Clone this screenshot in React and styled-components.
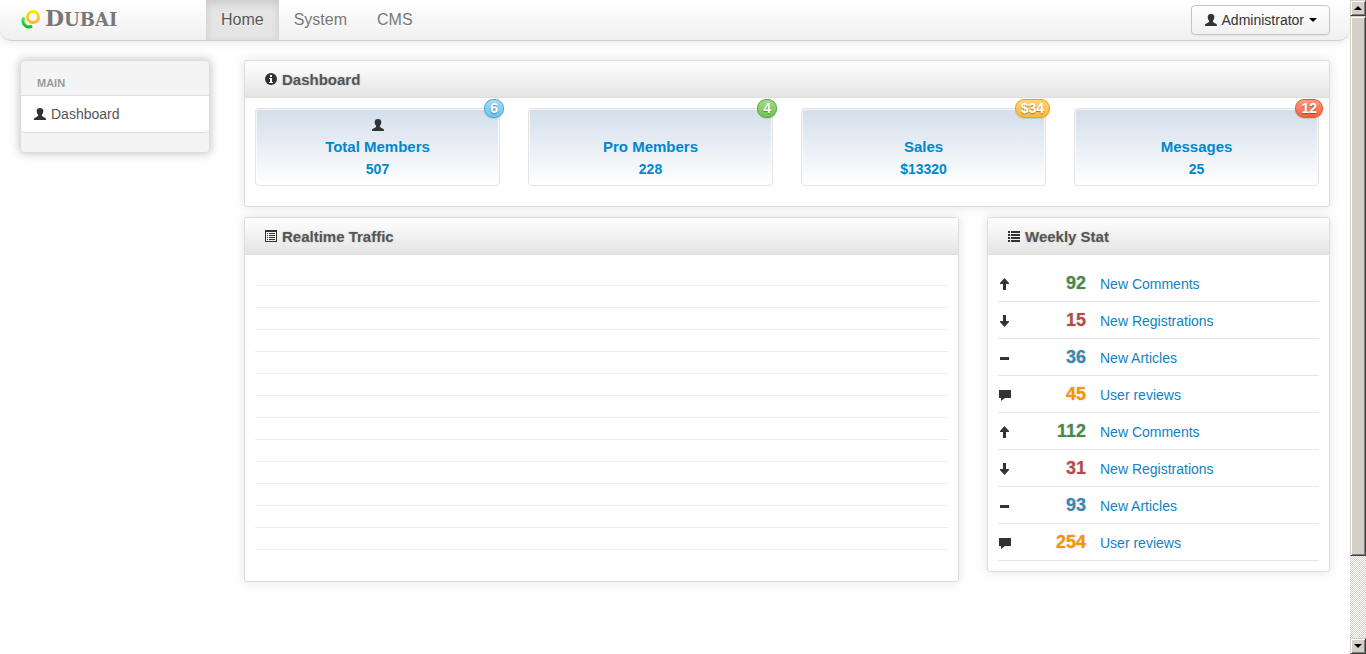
import React from "react";
import styled, { createGlobalStyle, css } from "styled-components";

const Global = createGlobalStyle`
  * { box-sizing: border-box; }
  body {
    margin: 0;
    background: #fefefe;
    color: #333;
    font: 14px/20px "Liberation Sans", Arial, sans-serif;
  }
  a { color: inherit; text-decoration: none; }
  ul { list-style: none; margin: 0; padding: 0; }
  h1, h2 { margin: 0; }
`;

const Shell = styled.div`
  display: grid;
  grid-template-columns: minmax(0, 1fr) 16px;
  height: 100vh;
  overflow: hidden;
`;

const Page = styled.div`
  overflow: hidden;
`;

const Navbar = styled.header`
  display: flex;
  align-items: stretch;
  height: 41px;
  padding: 0 20px;
  background: linear-gradient(#ffffff, #f0f0f0);
  border-bottom: 1px solid #d0d0d0;
  border-radius: 0 0 12px 12px;
  box-shadow: 0 1px 10px rgba(0, 0, 0, 0.1);
`;

const Brand = styled.a`
  display: flex;
  align-items: center;
  gap: 4px;
  width: 186px;
  height: 37px;
`;

const BrandName = styled.span`
  display: block;
  color: #777;
  font: bold 18px/36px "DejaVu Serif", serif;
  text-transform: uppercase;
  text-shadow: 0 1px 0 #fff;
  &::first-letter { font-size: 22px; }
`;

const NavMenu = styled.nav`
  display: flex;
  flex: 1;
`;

const NavLink = styled.a`
  padding: 0 15px;
  color: #777;
  font-size: 16px;
  line-height: 40px;
  text-shadow: 0 1px 0 #fff;
  ${(p) =>
    p.$active &&
    css`
      color: #555;
      background: #e5e5e5;
      box-shadow: inset 0 3px 8px rgba(0, 0, 0, 0.125);
    `}
`;

const UserButton = styled.button`
  display: flex;
  align-items: center;
  gap: 4px;
  height: 30px;
  margin-top: 5px;
  padding: 0 12px;
  color: #333;
  font: inherit;
  text-shadow: 0 1px 1px rgba(255, 255, 255, 0.75);
  background: linear-gradient(#ffffff, #f1f1f1);
  border: 1px solid #c5c5c5;
  border-radius: 4px;
  box-shadow: 0 1px 2px rgba(0, 0, 0, 0.05);
`;

const Caret = styled.span`
  margin-left: 1px;
  border: 4px solid transparent;
  border-top-color: #000;
  border-bottom: 0;
`;

const Body = styled.div`
  display: grid;
  grid-template-columns: 190fr 1086fr;
  gap: 34px;
  align-items: start;
  padding: 19px 20px;
`;

const Sidebar = styled.aside`
  padding: 12px 0 19px;
  background: #f4f4f4;
  border: 1px solid #ddd;
  border-radius: 4px;
  box-shadow: 0 0 10px #bdbdbd;
`;

const SidebarHeading = styled.h2`
  padding: 0 16px 2px;
  color: #999;
  font-size: 11px;
  line-height: 20px;
  text-transform: uppercase;
  text-shadow: 0 1px 0 #fff;
`;

const SidebarLink = styled.a`
  display: flex;
  align-items: center;
  gap: 4px;
  height: 38px;
  padding: 0 12px;
  color: #555;
  background: #fff;
  border: solid #ddd;
  border-width: 1px 0;
  border-radius: 0 0 4px 4px;
`;

const Content = styled.main`
  display: grid;
  gap: 10px;
`;

const Columns = styled.div`
  display: grid;
  grid-template-columns: 715fr 343fr;
  gap: 28px;
  align-items: start;
`;

const Panel = styled.section`
  background: #fff;
  border: 1px solid #dedede;
  border-radius: 3px;
  box-shadow: 0 0 10px rgba(189, 189, 189, 0.4);
`;

const PanelHeader = styled.header`
  display: flex;
  align-items: center;
  gap: 4px;
  height: 37px;
  padding: 0 19px;
  background: linear-gradient(#ffffff, #e4e4e4);
  border-bottom: 1px solid #dedede;
  border-radius: 3px 3px 0 0;
`;

const PanelTitle = styled.h2`
  padding-top: 2px;
  color: #555;
  font-size: 15px;
  line-height: 20px;
  text-shadow: 0 0 2px rgba(0, 0, 0, 0.2);
`;

const PanelBody = styled.div`
  padding: 10px;
`;

const Tiles = styled.div`
  display: grid;
  grid-template-columns: repeat(4, minmax(0, 1fr));
  gap: 28px;
  margin-bottom: 10px;
`;

const Tile = styled.a`
  position: relative;
  display: flex;
  flex-direction: column;
  align-items: center;
  height: 78px;
  padding-top: 5px;
  color: #0088cc;
  font-weight: bold;
  line-height: 22px;
  background: linear-gradient(#d3deeb, #ffffff);
  border: 1px solid #e3e3e3;
  border-radius: 4px;
  box-shadow: inset 0 0 0 1px rgba(255, 255, 255, 0.7);
`;

const TileIcon = styled.span`
  display: flex;
  align-items: center;
  height: 22px;
`;

const TileLabel = styled.span`
  font-size: 15px;
`;

const tones = {
  blue: ["#a5dcf7", "#6cc2ee", "#44a9e0"],
  green: ["#a3dd84", "#70c24f", "#58a83a"],
  yellow: ["#ffd27c", "#fcb83a", "#f0a01c"],
  red: ["#fc9b83", "#fb5f3d", "#f45232"],
};

const Badge = styled.span`
  position: absolute;
  top: -10px;
  right: -5px;
  height: 19px;
  padding: 0 5px;
  color: #fff;
  font-size: 14px;
  line-height: 17px;
  text-shadow: 0 1px 1px rgba(0, 0, 0, 0.35);
  background: linear-gradient(${(p) => tones[p.$tone][0]}, ${(p) => tones[p.$tone][1]});
  border: 1px solid ${(p) => tones[p.$tone][2]};
  border-radius: 9px;
  box-shadow: 0 1px 1px rgba(0, 0, 0, 0.1);
`;

const TrafficGrid = styled.ul`
  padding-bottom: 21px;
`;

const TrafficLine = styled.li`
  height: 22px;
  border-bottom: 1px solid #eee;
  &:first-child { height: 21px; }
`;

const StatRow = styled.li`
  display: flex;
  align-items: center;
  height: 37px;
  padding-top: 2px;
  border-bottom: 1px solid #e6e6e6;
`;

const StatCount = styled.span`
  width: 74px;
  padding-bottom: 2px;
  color: ${(p) => p.$color};
  font-size: 18px;
  font-weight: bold;
  text-align: right;
  text-shadow: 0 0 2px rgba(0, 0, 0, 0.25);
`;

const StatLink = styled.a`
  margin-left: 14px;
  color: #0e83c4;
`;

const Scrollbar = styled.div`
  display: flex;
  flex-direction: column;
  background: repeating-conic-gradient(#d4d0c8 0 25%, #ffffff 0 50%) 0 0 / 2px 2px;
`;

const raised = css`
  background: #d4d0c8;
  border: 1px solid;
  border-color: #d4d0c8 #404040 #404040 #d4d0c8;
  box-shadow: inset 1px 1px 0 #fff, inset -1px -1px 0 #808080;
`;

const ScrollButton = styled.button`
  ${raised}
  display: flex;
  align-items: center;
  justify-content: center;
  height: 16px;
  padding: 0;
  border-radius: 0;
`;

const ScrollThumb = styled.div`
  ${raised}
  flex: 540;
`;

const ScrollTrack = styled.div`
  flex: 82;
`;

const Arrow = styled.span`
  border: 4px solid transparent;
  ${(p) =>
    p.$up
      ? "border-top: 0; border-bottom-color: #000;"
      : "border-bottom: 0; border-top-color: #000;"}
`;

const Svg = styled.svg`
  display: block;
  flex: none;
  fill: #333;
`;

const glyphs = {
  user: <path d="M7 1c2.200 0 3.300 1.200 3.300 3 0 1.500-.5 2.800-1.300 3.600v1.200c.3.900 1.700 1.200 3 1.900.8.400 1 1 1 2.300H1c0-1.300.2-1.900 1-2.300 1.300-.7 2.700-1 3-1.900V7.600C4.200 6.800 3.700 5.500 3.700 4c0-1.800 1.100-3 3.300-3z" />,
  info: (
    <>
      <circle cx="7" cy="7" r="6" />
      <path fill="#fff" d="M6 3h2v2H6zM5 6h3v4h1v1H5v-1h1V7H5z" />
    </>
  ),
  sheet: <path fillRule="evenodd" d="M1 1h12v12H1zM2 3v9h10V3zM3 4h1v1H3zm2 0h6v1H5zM3 6h1v1H3zm2 0h6v1H5zM3 8h1v1H3zm2 0h6v1H5zM3 10h1v1H3zm2 0h6v1H5z" />,
  list: <path d="M1 2h2v2H1zm3 0h9v2H4zM1 5h2v2H1zm3 0h9v2H4zM1 8h2v2H1zm3 0h9v2H4zM1 11h2v2H1zm3 0h9v2H4z" />,
  up: <path d="M6.500 1L11 6v1H8v6H5V7H2V6z" />,
  down: <path d="M6.500 13L2 8V7h3V1h3v6h3v1z" />,
  minus: <path d="M2 6h9v3H2z" />,
  comment: <path d="M1 2h12v8H7l-4 3v-3H1z" />,
};

const Icon = ({ name }) => (
  <Svg width="14" height="14" viewBox="0 0 14 14" aria-hidden="true">
    {glyphs[name]}
  </Svg>
);

const Logo = () => (
  <svg width="21" height="21" viewBox="0 0 21 21" aria-hidden="true">
    <defs>
      <linearGradient id="gold" x1="0" y1="0" x2="0" y2="1">
        <stop offset="0" stopColor="#ffe500" />
        <stop offset="1" stopColor="#ffb62e" />
      </linearGradient>
      <linearGradient id="leaf" x1="0" y1="0" x2="0" y2="1">
        <stop offset="0" stopColor="#57e357" />
        <stop offset="1" stopColor="#00c814" />
      </linearGradient>
    </defs>
    <path d="M4 9.500A6 6 0 0 0 12 18" fill="none" stroke="url(#leaf)" strokeWidth="3" />
    <circle cx="13" cy="9" r="5.500" fill="none" stroke="url(#gold)" strokeWidth="3" />
  </svg>
);

const tiles = [
  { label: "Total Members", value: "507", badge: "6", tone: "blue", icon: "user" },
  { label: "Pro Members", value: "228", badge: "4", tone: "green" },
  { label: "Sales", value: "$13320", badge: "$34", tone: "yellow" },
  { label: "Messages", value: "25", badge: "12", tone: "red" },
];

const kinds = [
  { icon: "up", label: "New Comments", color: "#468847" },
  { icon: "down", label: "New Registrations", color: "#b94a48" },
  { icon: "minus", label: "New Articles", color: "#3a87ad" },
  { icon: "comment", label: "User reviews", color: "#f89406" },
];

const counts = [92, 15, 36, 45, 112, 31, 93, 254];

export default function App() {
  return (
    <>
      <Global />
      <Shell>
        <Page>
          <Navbar>
            <Brand href="#">
              <Logo />
              <BrandName>Dubai</BrandName>
            </Brand>
            <NavMenu>
              <NavLink href="#" $active>Home</NavLink>
              <NavLink href="#">System</NavLink>
              <NavLink href="#">CMS</NavLink>
            </NavMenu>
            <UserButton type="button">
              <Icon name="user" />
              Administrator
              <Caret />
            </UserButton>
          </Navbar>
          <Body>
            <Sidebar>
              <SidebarHeading>Main</SidebarHeading>
              <SidebarLink href="#">
                <Icon name="user" />
                Dashboard
              </SidebarLink>
            </Sidebar>
            <Content>
              <Panel>
                <PanelHeader>
                  <Icon name="info" />
                  <PanelTitle>Dashboard</PanelTitle>
                </PanelHeader>
                <PanelBody>
                  <Tiles>
                    {tiles.map((t) => (
                      <Tile href="#" key={t.label}>
                        <TileIcon>{t.icon && <Icon name={t.icon} />}</TileIcon>
                        <TileLabel>{t.label}</TileLabel>
                        <span>{t.value}</span>
                        <Badge $tone={t.tone}>{t.badge}</Badge>
                      </Tile>
                    ))}
                  </Tiles>
                </PanelBody>
              </Panel>
              <Columns>
                <Panel>
                  <PanelHeader>
                    <Icon name="sheet" />
                    <PanelTitle>Realtime Traffic</PanelTitle>
                  </PanelHeader>
                  <PanelBody>
                    <TrafficGrid>
                      {Array.from({ length: 13 }, (_, i) => (
                        <TrafficLine key={i} />
                      ))}
                    </TrafficGrid>
                  </PanelBody>
                </Panel>
                <Panel>
                  <PanelHeader>
                    <Icon name="list" />
                    <PanelTitle>Weekly Stat</PanelTitle>
                  </PanelHeader>
                  <PanelBody>
                    <ul>
                      {counts.map((count, i) => {
                        const kind = kinds[i % kinds.length];
                        return (
                          <StatRow key={i}>
                            <Icon name={kind.icon} />
                            <StatCount $color={kind.color}>{count}</StatCount>
                            <StatLink href="#">{kind.label}</StatLink>
                          </StatRow>
                        );
                      })}
                    </ul>
                  </PanelBody>
                </Panel>
              </Columns>
            </Content>
          </Body>
        </Page>
        <Scrollbar>
          <ScrollButton type="button" aria-label="Scroll up"><Arrow $up /></ScrollButton>
          <ScrollThumb />
          <ScrollTrack />
          <ScrollButton type="button" aria-label="Scroll down"><Arrow /></ScrollButton>
        </Scrollbar>
      </Shell>
    </>
  );
}
